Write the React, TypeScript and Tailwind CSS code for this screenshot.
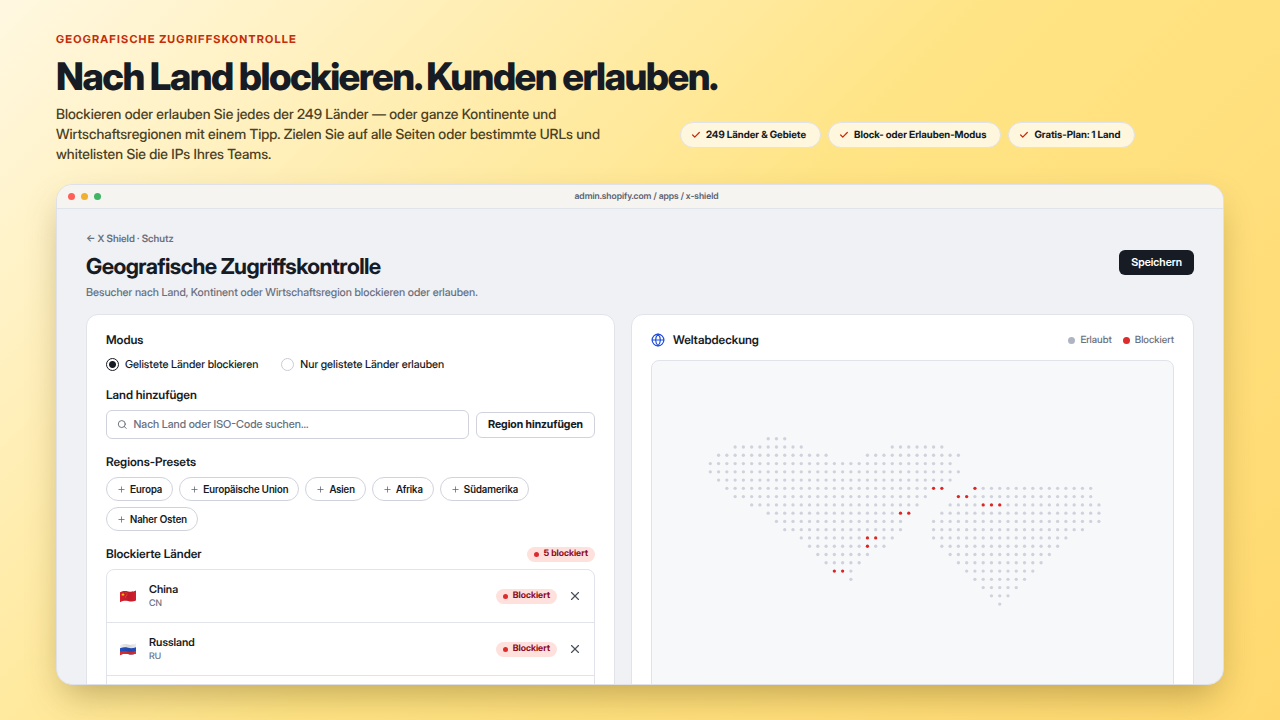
import React from 'react';
import { Check, Globe, Plus, Search, X } from 'lucide-react';

const features = ['249 Länder & Gebiete', 'Block- oder Erlauben-Modus', 'Gratis-Plan: 1 Land'];

const presets = ['Europa', 'Europäische Union', 'Asien', 'Afrika', 'Südamerika', 'Naher Osten'];

const countries = [
  { code: 'CN', name: 'China' },
  { code: 'RU', name: 'Russland' },
];

// Each row lists [first, last] column spans of land
const landRows = [
  [[7, 9]],
  [[3, 11], [22, 28]],
  [[1, 14], [19, 30]],
  [[0, 29]],
  [[0, 30]],
  [[1, 29]],
  [[2, 28], [32, 46]],
  [[3, 26], [30, 46]],
  [[5, 25], [29, 47]],
  [[7, 24], [28, 47]],
  [[8, 23], [27, 47]],
  [[9, 23], [27, 45]],
  [[11, 22], [27, 43]],
  [[12, 21], [28, 42]],
  [[13, 19], [29, 41]],
  [[14, 18], [30, 40]],
  [[15, 17], [31, 39]],
  [[17, 17], [32, 38]],
  [[33, 37]],
  [[34, 36]],
  [[35, 35]],
];

// "column,row" of the dots that are blocked
const blockedDots = new Set([
  '27,6', '28,6', '32,6', '30,7', '31,7', '33,8', '34,8', '35,8',
  '23,9', '24,9', '19,12', '20,12', '19,13', '15,16', '16,16',
]);

function WorldMap() {
  return (
    <svg viewBox="0 0 63 39" className="w-full" role="img" aria-label="Weltkarte">
      {landRows.map((spans, row) =>
        spans.map(([from, to]) =>
          Array.from({ length: to - from + 1 }, (_, i) => from + i).map((col) => (
            <circle
              key={`${col}-${row}`}
              cx={col + 7.05}
              cy={row + 9.4}
              r={0.2}
              fill={blockedDots.has(`${col},${row}`) ? '#dc2626' : '#cfd2dc'}
            />
          ))
        )
      )}
    </svg>
  );
}

function BlockedBadge({ label }: { label: string }) {
  return (
    <span className="inline-flex h-[15px] items-center gap-[5px] rounded-full bg-[#fee1dd] px-[7px] text-[9px] font-bold text-[#8e0b21]">
      <span className="size-[5px] rounded-full bg-[#dc2c2c]" />
      {label}
    </span>
  );
}

function Flag({ code }: { code: string }) {
  const id = `flag-${code}`;
  const shape = 'M1 3.2C4 1.6 6.5 1.8 9 2.4S14 3 17 1.6V11.6C14 13 11.5 12.6 9 12S4 11.6 1 13.2Z';
  return (
    <svg viewBox="0 0 18 14" className="h-[14px] w-[18px]" role="img" aria-label={code}>
      <defs>
        <clipPath id={id}>
          <path d={shape} />
        </clipPath>
        <linearGradient id={`${id}-shade`}>
          <stop offset="0" stopColor="#000" stopOpacity="0" />
          <stop offset="0.55" stopColor="#000" stopOpacity="0.12" />
          <stop offset="1" stopColor="#000" stopOpacity="0.02" />
        </linearGradient>
      </defs>
      <g clipPath={`url(#${id})`}>
        {code === 'CN' ? (
          <>
            <rect width="18" height="14" fill="#d8202f" />
            <path d="M4 3.6l.5 1.3h1.4l-1.1.8.4 1.4L4 6.3l-1.2.8.4-1.4-1.1-.8h1.4z" fill="#fbd116" />
            <circle cx="7" cy="3.6" r="0.4" fill="#fbd116" />
            <circle cx="8" cy="5" r="0.4" fill="#fbd116" />
            <circle cx="7.6" cy="6.8" r="0.4" fill="#fbd116" />
            <circle cx="6.4" cy="8" r="0.4" fill="#fbd116" />
          </>
        ) : (
          <>
            <rect width="18" height="14" fill="#f3f3f3" />
            <path d="M0 6.6C4 5 6.5 5.2 9 5.8S14 6.4 18 5V14H0Z" fill="#2350c4" />
            <path d="M0 10.2C4 8.6 6.5 8.8 9 9.4S14 10 18 8.4V14H0Z" fill="#dc2f2c" />
          </>
        )}
        <rect width="18" height="14" fill={`url(#${id}-shade)`} />
      </g>
    </svg>
  );
}

function BlockSettings() {
  return (
    <section className="rounded-xl border border-[#e1e3ea] bg-white px-[19px] pt-[17px]">
      <fieldset>
        <legend className="text-[12px] leading-4 font-semibold">Modus</legend>
        <div className="mt-2 flex gap-[23px] text-[11px] leading-4 font-medium">
          <label className="flex items-center gap-1.5">
            <input
              type="radio"
              name="mode"
              defaultChecked
              className="size-[13px] appearance-none rounded-full border border-[#c9ccd6] checked:border-[#171b24] checked:bg-[radial-gradient(circle,#171b24_3px,transparent_4px)]"
            />
            Gelistete Länder blockieren
          </label>
          <label className="flex items-center gap-1.5">
            <input
              type="radio"
              name="mode"
              className="size-[13px] appearance-none rounded-full border border-[#c9ccd6] checked:border-[#171b24] checked:bg-[radial-gradient(circle,#171b24_3px,transparent_4px)]"
            />
            Nur gelistete Länder erlauben
          </label>
        </div>
      </fieldset>

      <label htmlFor="country" className="mt-[15px] block text-[12px] leading-4 font-semibold">
        Land hinzufügen
      </label>
      <div className="mt-[7px] flex items-center gap-[7px]">
        <div className="flex h-[29px] flex-1 items-center gap-1.5 rounded-md border border-[#d0d3dc] px-2.5">
          <Search className="size-[11px] text-[#5b6270]" />
          <input
            id="country"
            type="text"
            placeholder="Nach Land oder ISO-Code suchen..."
            className="w-full text-[11px] font-medium outline-none placeholder:text-[#6a707d]"
          />
        </div>
        <button className="h-[26px] rounded-md border border-[#d0d3dc] px-[11px] text-[11px] font-bold">
          Region hinzufügen
        </button>
      </div>

      <h2 className="mt-[15px] text-[12px] leading-4 font-semibold">Regions-Presets</h2>
      <div className="mt-[7px] flex flex-wrap gap-1.5">
        {presets.map((preset) => (
          <button
            key={preset}
            className="flex h-6 items-center gap-1 rounded-full border border-[#d0d3dc] px-2.5 text-[10px] font-semibold"
          >
            <Plus className="size-[9px] text-[#5b6270]" />
            {preset}
          </button>
        ))}
      </div>

      <div className="mt-[15px] flex items-center justify-between">
        <h2 className="text-[12px] leading-4 font-semibold">Blockierte Länder</h2>
        <BlockedBadge label="5 blockiert" />
      </div>
      <ul className="mt-[7px] min-h-[270px] rounded-lg border border-[#e1e3ea]">
        {countries.map((country) => (
          <li key={country.code} className="flex h-[53px] items-center border-b border-[#e1e3ea] px-3">
            <Flag code={country.code} />
            <div className="ml-3 flex-1">
              <div className="text-[11px] leading-4 font-semibold">{country.name}</div>
              <div className="text-[9px] leading-[14px] font-medium text-[#6a707d]">{country.code}</div>
            </div>
            <BlockedBadge label="Blockiert" />
            <button className="ml-[11px] text-[#4a505c]" aria-label={`${country.name} entfernen`}>
              <X className="size-[14px]" />
            </button>
          </li>
        ))}
      </ul>
    </section>
  );
}

function Coverage() {
  return (
    <section className="rounded-xl border border-[#e1e3ea] bg-white px-[19px] pt-[17px]">
      <div className="flex items-center">
        <Globe className="size-[14px] text-[#1d4ed8]" />
        <h2 className="ml-2 flex-1 text-[12px] leading-4 font-semibold">Weltabdeckung</h2>
        <div className="flex gap-[11px] text-[10px] leading-4 font-medium text-[#6a707d]">
          <span className="flex items-center gap-[5px]">
            <span className="size-[7px] rounded-full bg-[#aeb4c2]" />
            Erlaubt
          </span>
          <span className="flex items-center gap-[5px]">
            <span className="size-[7px] rounded-full bg-[#dc2c2c]" />
            Blockiert
          </span>
        </div>
      </div>
      <div className="mt-3 rounded-lg border border-[#e1e3ea] bg-[#f7f8fa] pb-20">
        <WorldMap />
      </div>
    </section>
  );
}

export default function App() {
  return (
    <main className="flex h-screen flex-col overflow-hidden bg-[linear-gradient(135deg,#fff8e1_0%,#ffe485_50%,#ffd970_100%)] px-14 pt-[31px] pb-[35px] font-['Inter_Display','Inter',sans-serif] text-[#171b24] antialiased [text-rendering:geometricPrecision]">
      <header>
        <p className="text-[11px] leading-4 font-bold tracking-[0.11em] text-[#c42d0a]">
          GEOGRAFISCHE ZUGRIFFSKONTROLLE
        </p>
        <h1 className="mt-[9px] text-[38px] leading-[42px] font-extrabold tracking-[-0.04em]">
          Nach Land blockieren. Kunden erlauben.
        </h1>
        <div className="mt-[7px] flex items-center gap-16">
          <p className="max-w-[560px] text-[14px] leading-5 font-medium text-[#4b4124]">
            Blockieren oder erlauben Sie jedes der 249 Länder — oder ganze Kontinente und Wirtschaftsregionen
            mit einem Tipp. Zielen Sie auf alle Seiten oder bestimmte URLs und whitelisten Sie die IPs Ihres
            Teams.
          </p>
          <ul className="flex gap-[7px]">
            {features.map((feature) => (
              <li
                key={feature}
                className="flex h-[26px] items-center gap-[5px] rounded-full border border-[#e1e3ea] bg-[#fff6de] pr-[14px] pl-2.5 text-[10px] font-bold whitespace-nowrap"
              >
                <Check className="size-[10px] text-[#c42d0a]" strokeWidth={3} />
                {feature}
              </li>
            ))}
          </ul>
        </div>
      </header>

      <div className="mt-[19px] flex min-h-0 flex-1 flex-col overflow-hidden rounded-2xl border border-[#dfe1ea] bg-[#f0f1f5] shadow-[0_16px_36px_-8px_rgba(90,70,10,0.4)]">
        <div className="flex h-6 shrink-0 items-center border-b border-[#e1e3ea] bg-[#f6f4f0] px-[11px]">
          <div className="flex gap-1.5">
            <span className="size-[7px] rounded-full bg-[#ff5f57]" />
            <span className="size-[7px] rounded-full bg-[#f0b032]" />
            <span className="size-[7px] rounded-full bg-[#3fb565]" />
          </div>
          <span className="flex-1 pr-5 text-center text-[9px] font-semibold text-[#5b6270]">
            admin.shopify.com / apps / x-shield
          </span>
        </div>

        <div className="px-[29px] pt-[22px]">
          <div className="flex items-start justify-between">
            <div>
              <a href="#" className="block text-[10px] leading-4 font-semibold text-[#6a707d]">
                ← X Shield · Schutz
              </a>
              <h1 className="mt-1.5 text-[22px] leading-7 font-bold tracking-[-0.025em]">
                Geografische Zugriffskontrolle
              </h1>
              <p className="mt-[3px] text-[11px] leading-4 font-medium text-[#6a707d]">
                Besucher nach Land, Kontinent oder Wirtschaftsregion blockieren oder erlauben.
              </p>
            </div>
            <button className="mt-[19px] h-[25px] rounded-md bg-[#171b24] px-3 text-[11px] font-semibold text-white">
              Speichern
            </button>
          </div>
          <div className="mt-[14px] grid grid-cols-[530fr_564fr] gap-4">
            <BlockSettings />
            <Coverage />
          </div>
        </div>
      </div>
    </main>
  );
}
